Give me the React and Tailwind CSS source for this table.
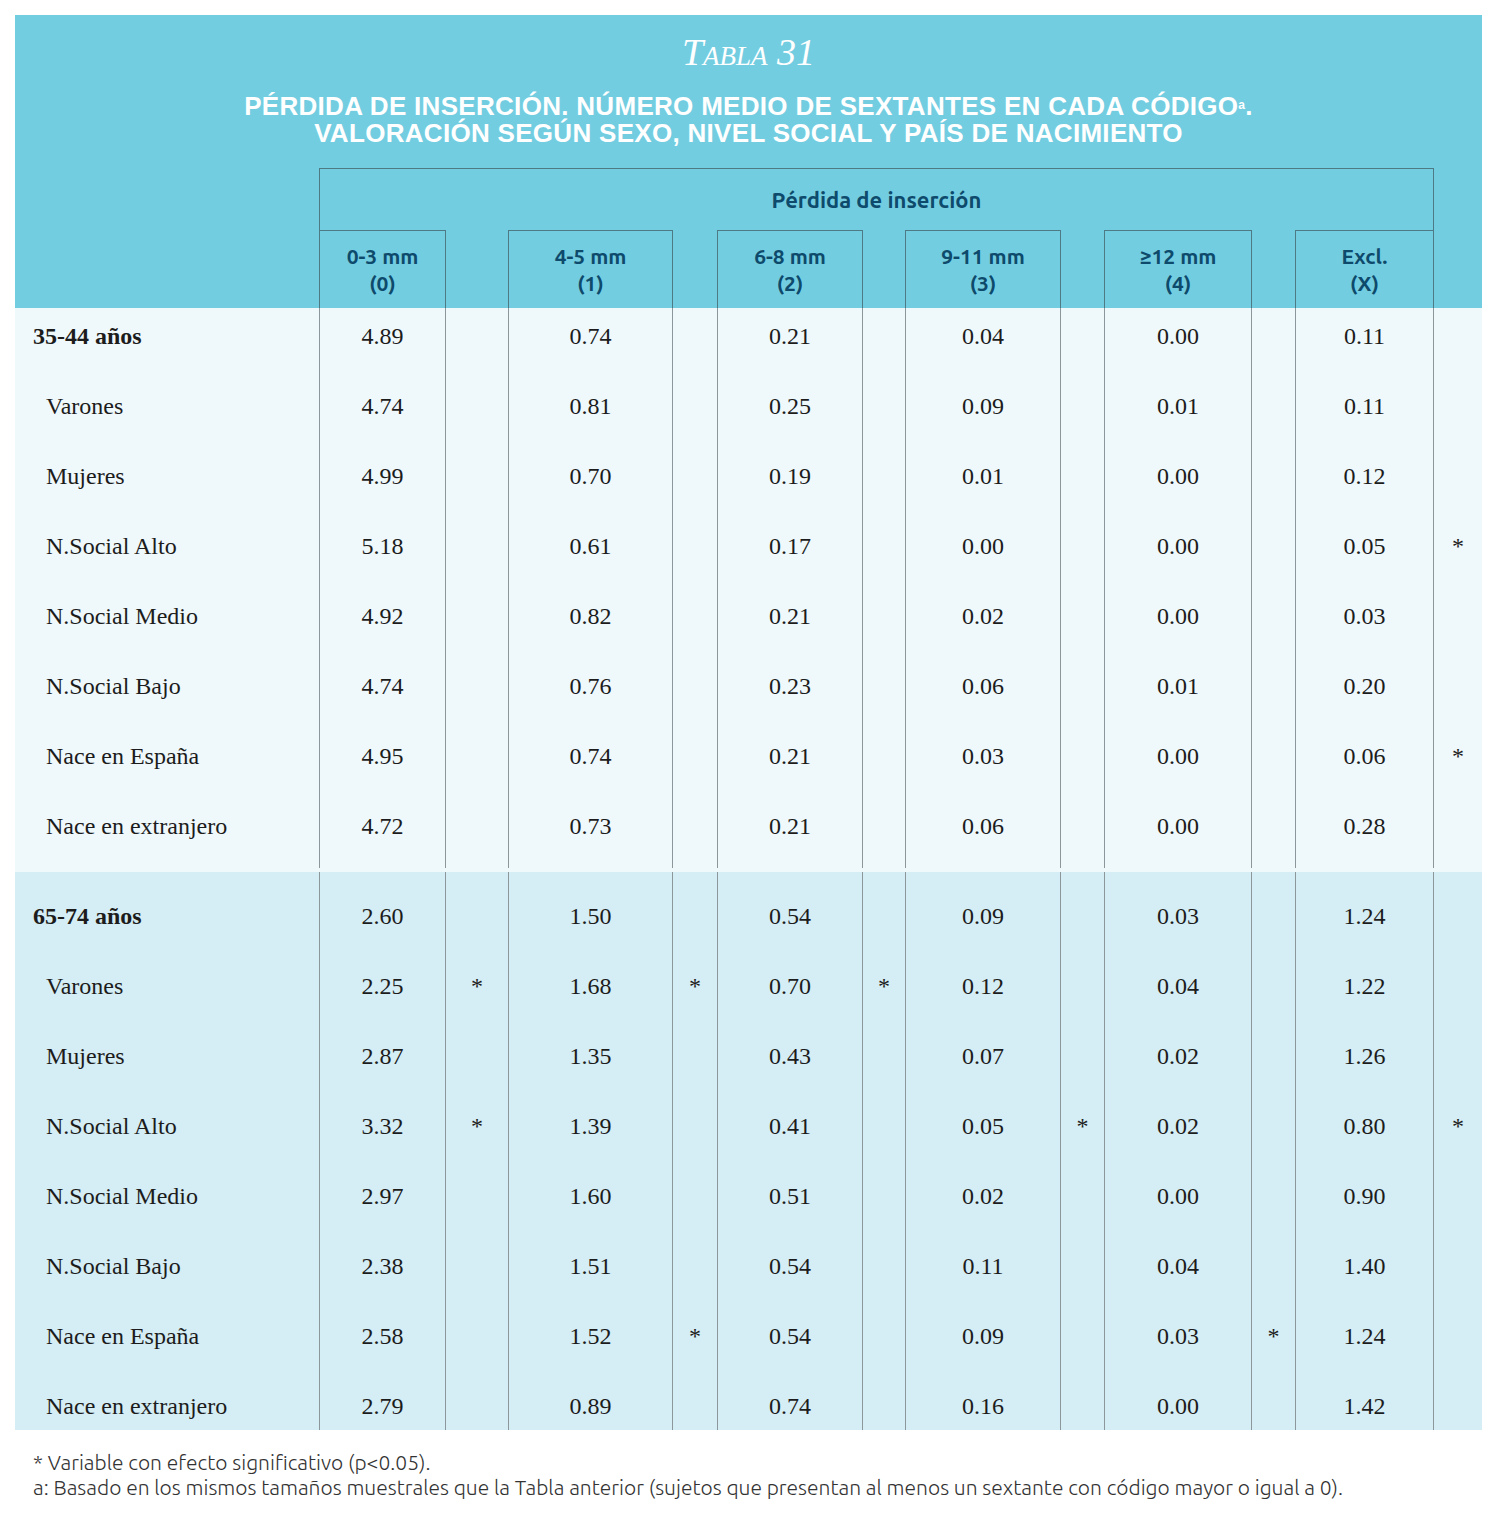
import React from "react";

const cols = ["0-3 mm", "4-5 mm", "6-8 mm", "9-11 mm", "≥12 mm", "Excl."];
const codes = ["(0)", "(1)", "(2)", "(3)", "(4)", "(X)"];

// widths: label, then column / star gap pairs
const colW = ["w-[127px]", "w-[165px]", "w-[146px]", "w-[156px]", "w-[148px]", "w-[139px]"];
const gapW = ["w-[62px]", "w-[44px]", "w-[42px]", "w-[43px]", "w-[43px]", "w-[48px]"];

const young = [
  { label: "35-44 años", bold: true, v: ["4.89", "0.74", "0.21", "0.04", "0.00", "0.11"], s: [] },
  { label: "Varones", v: ["4.74", "0.81", "0.25", "0.09", "0.01", "0.11"], s: [] },
  { label: "Mujeres", v: ["4.99", "0.70", "0.19", "0.01", "0.00", "0.12"], s: [] },
  { label: "N.Social Alto", v: ["5.18", "0.61", "0.17", "0.00", "0.00", "0.05"], s: [5] },
  { label: "N.Social Medio", v: ["4.92", "0.82", "0.21", "0.02", "0.00", "0.03"], s: [] },
  { label: "N.Social Bajo", v: ["4.74", "0.76", "0.23", "0.06", "0.01", "0.20"], s: [] },
  { label: "Nace en España", v: ["4.95", "0.74", "0.21", "0.03", "0.00", "0.06"], s: [5] },
  { label: "Nace en extranjero", v: ["4.72", "0.73", "0.21", "0.06", "0.00", "0.28"], s: [] },
];

const old = [
  { label: "65-74 años", bold: true, v: ["2.60", "1.50", "0.54", "0.09", "0.03", "1.24"], s: [] },
  { label: "Varones", v: ["2.25", "1.68", "0.70", "0.12", "0.04", "1.22"], s: [0, 1, 2] },
  { label: "Mujeres", v: ["2.87", "1.35", "0.43", "0.07", "0.02", "1.26"], s: [] },
  { label: "N.Social Alto", v: ["3.32", "1.39", "0.41", "0.05", "0.02", "0.80"], s: [0, 3, 5] },
  { label: "N.Social Medio", v: ["2.97", "1.60", "0.51", "0.02", "0.00", "0.90"], s: [] },
  { label: "N.Social Bajo", v: ["2.38", "1.51", "0.54", "0.11", "0.04", "1.40"], s: [] },
  { label: "Nace en España", v: ["2.58", "1.52", "0.54", "0.09", "0.03", "1.24"], s: [1, 4] },
  { label: "Nace en extranjero", v: ["2.79", "0.89", "0.74", "0.16", "0.00", "1.42"], s: [] },
];

const Row = ({ row, short }) => (
  <div className={`flex ${short ? "h-[52px]" : "h-[70px]"}`}>
    <div
      className={`w-[304px] pt-[14px] leading-[28px] ${
        row.bold ? "pl-[18px] font-bold" : "pl-[31px]"
      }`}
    >
      {row.label}
    </div>
    {row.v.map((val, i) => (
      <React.Fragment key={i}>
        <div
          className={`${colW[i]} border-x border-[#8c979b] pt-[14px] leading-[28px] text-center`}
        >
          {val}
        </div>
        <div className={`${gapW[i]} pt-[14px] leading-[28px] text-center`}>
          {row.s.includes(i) ? "*" : ""}
        </div>
      </React.Fragment>
    ))}
  </div>
);

export default function App() {
  return (
    <div className="w-[1500px] bg-white pt-[15px] px-[15px] pb-[30px]">
      {/* Header */}
      <div className="w-[1467px] bg-[#73cde1]">
        <div className="h-[153px] pt-[16px] text-center text-white">
          <div className="font-['Liberation_Serif',serif] italic text-[38px] leading-[42px] [font-variant-caps:small-caps]">
            Tabla 31
          </div>
          <div className="mt-[20px] font-['Liberation_Sans',sans-serif] font-bold uppercase text-[26px] leading-[27px] tracking-[0.3px]">
            <div>
              Pérdida de inserción. Número medio de sextantes en cada código
              <sup className="normal-case text-[12px]">a</sup>.
            </div>
            <div>Valoración según sexo, nivel social y país de nacimiento</div>
          </div>
        </div>

        <div className="flex font-['Ubuntu','Open_Sans',sans-serif] text-[#0d4a6b] font-bold">
          <div className="w-[304px]" />
          <div className="w-[1115px] h-[62px] border-t border-x border-[#4e7a86] flex items-center justify-center text-[22px]">
            Pérdida de inserción
          </div>
        </div>

        <div className="flex font-['Ubuntu','Open_Sans',sans-serif] text-[#0d4a6b] font-bold text-[21px] leading-[27px]">
          <div className="w-[304px]" />
          {cols.map((c, i) => (
            <React.Fragment key={c}>
              <div
                className={`${colW[i]} h-[78px] border-t border-x border-[#4e7a86] flex flex-col items-center justify-center`}
              >
                <div>{c}</div>
                <div>{codes[i]}</div>
              </div>
              <div className={gapW[i]} />
            </React.Fragment>
          ))}
        </div>
      </div>

      {/* Body */}
      <div className="w-[1467px] font-['Liberation_Serif',serif] text-[24px] text-[#1c1c1c]">
        <div className="bg-[#eff8fb] pb-[4px]">
          {young.map((r) => (
            <Row key={r.label} row={r} />
          ))}
        </div>
        <div className="bg-[#d5edf4]">
          <div className="flex h-[16px]">
            <div className="w-[304px]" />
            {cols.map((c, i) => (
              <React.Fragment key={c}>
                <div className={`${colW[i]} border-x border-[#8c979b]`} />
                <div className={gapW[i]} />
              </React.Fragment>
            ))}
          </div>
          {old.map((r, i) => (
            <Row key={r.label} row={r} short={i === old.length - 1} />
          ))}
        </div>
      </div>

      {/* Notes */}
      <div className="mt-[20px] pl-[18px] font-['Ubuntu','Open_Sans',sans-serif] font-light text-[21px] leading-[25px] text-[#333]">
        <div>* Variable con efecto significativo (p&lt;0.05).</div>
        <div>
          a: Basado en los mismos tamaños muestrales que la Tabla anterior (sujetos que
          presentan al menos un sextante con código mayor o igual a 0).
        </div>
      </div>
    </div>
  );
}
